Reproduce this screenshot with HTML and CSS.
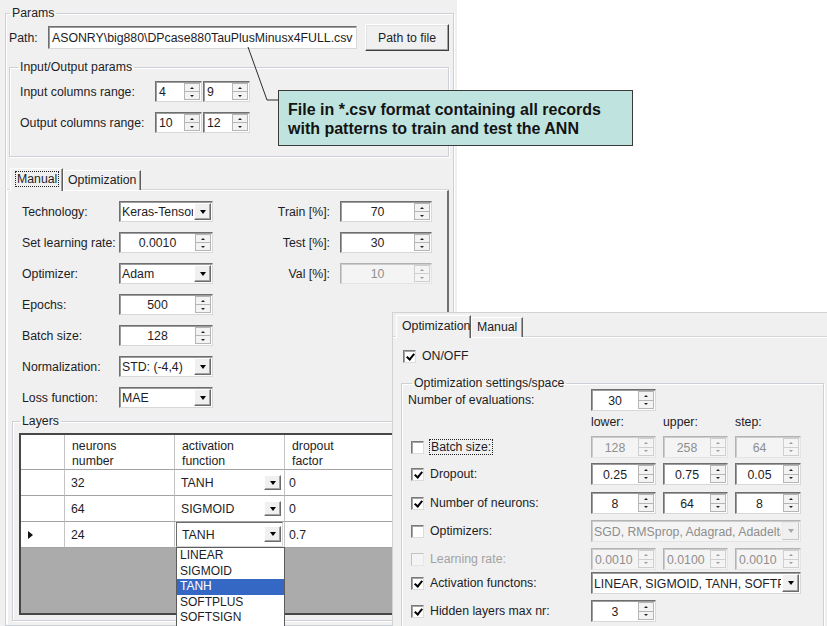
FILE: index.html
```html
<!DOCTYPE html>
<html lang="en">
<head>
<meta charset="utf-8">
<title>ANN training settings</title>
<link rel="stylesheet" href="styles.css">
</head>
<body>
<main class="desk">

  <section class="win win-main">
    <fieldset class="group group-params">
      <legend>Params</legend>
      <div class="params-body">
        <div class="path-row">
          <span class="path-label">Path:</span>
          <div class="field path-field">ASONRY\big880\DPcase880TauPlusMinusx4FULL.csv</div>
          <button class="push" type="button">Path to file</button>
        </div>

        <fieldset class="group group-io">
          <legend>Input/Output params</legend>
          <div class="io-body">
            <div class="io-row">
              <span class="io-label">Input columns range:</span>
              <div class="spin io-spin"><span class="spin-val left">4</span><span class="spin-btns"><i class="up"></i><i class="dn"></i></span></div>
              <div class="spin io-spin"><span class="spin-val left">9</span><span class="spin-btns"><i class="up"></i><i class="dn"></i></span></div>
            </div>
            <div class="io-row">
              <span class="io-label">Output columns range:</span>
              <div class="spin io-spin"><span class="spin-val left">10</span><span class="spin-btns"><i class="up"></i><i class="dn"></i></span></div>
              <div class="spin io-spin"><span class="spin-val left">12</span><span class="spin-btns"><i class="up"></i><i class="dn"></i></span></div>
            </div>
          </div>
        </fieldset>

        <div class="tabs tabs-main">
          <div class="tabstrip">
            <span class="tab tab-on"><span class="focus">Manual</span></span>
            <span class="tab">Optimization</span>
          </div>
          <div class="tabpage manual-page">
            <div class="manual-grid">
              <span class="lbl">Technology:</span>
              <div class="combo"><span class="combo-val">Keras-TensorFlow</span><span class="drop"></span></div>
              <span class="lbl-r">Train [%]:</span>
              <div class="spin"><span class="spin-val">70</span><span class="spin-btns"><i class="up"></i><i class="dn"></i></span></div>

              <span class="lbl">Set learning rate:</span>
              <div class="spin"><span class="spin-val">0.0010</span><span class="spin-btns"><i class="up"></i><i class="dn"></i></span></div>
              <span class="lbl-r">Test [%]:</span>
              <div class="spin"><span class="spin-val">30</span><span class="spin-btns"><i class="up"></i><i class="dn"></i></span></div>

              <span class="lbl">Optimizer:</span>
              <div class="combo"><span class="combo-val">Adam</span><span class="drop"></span></div>
              <span class="lbl-r">Val [%]:</span>
              <div class="spin off"><span class="spin-val">10</span><span class="spin-btns"><i class="up"></i><i class="dn"></i></span></div>

              <span class="lbl">Epochs:</span>
              <div class="spin"><span class="spin-val">500</span><span class="spin-btns"><i class="up"></i><i class="dn"></i></span></div>

              <span class="lbl">Batch size:</span>
              <div class="spin"><span class="spin-val">128</span><span class="spin-btns"><i class="up"></i><i class="dn"></i></span></div>

              <span class="lbl">Normalization:</span>
              <div class="combo"><span class="combo-val">STD: (-4,4)</span><span class="drop"></span></div>

              <span class="lbl">Loss function:</span>
              <div class="combo"><span class="combo-val">MAE</span><span class="drop"></span></div>
            </div>

            <fieldset class="group group-layers">
              <legend>Layers</legend>
              <div class="layers-body">
                <div class="dgv">
                  <div class="dgv-row dgv-head">
                    <span class="rh"></span>
                    <span class="hc">neurons<br>number</span>
                    <span class="hc">activation<br>function</span>
                    <span class="hc">dropout<br>factor</span>
                  </div>
                  <div class="dgv-row">
                    <span class="rh"></span>
                    <span class="c">32</span>
                    <span class="c c-act">TANH<span class="cell-drop"></span></span>
                    <span class="c c-drop">0</span>
                  </div>
                  <div class="dgv-row">
                    <span class="rh"></span>
                    <span class="c">64</span>
                    <span class="c c-act">SIGMOID<span class="cell-drop"></span></span>
                    <span class="c c-drop">0</span>
                  </div>
                  <div class="dgv-row">
                    <span class="rh rh-current"><i class="row-arrow"></i></span>
                    <span class="c">24</span>
                    <span class="c c-act c-edit">
                      <span class="cell-combo">TANH<span class="cell-drop"></span></span>
                      <ul class="droplist">
                        <li>LINEAR</li>
                        <li>SIGMOID</li>
                        <li class="sel">TANH</li>
                        <li>SOFTPLUS</li>
                        <li>SOFTSIGN</li>
                      </ul>
                    </span>
                    <span class="c c-drop">0.7</span>
                  </div>
                </div>
              </div>
            </fieldset>
          </div>
        </div>
      </div>
    </fieldset>
  </section>

  <svg class="leader" width="300" height="110" viewBox="0 0 300 110" aria-hidden="true">
    <polyline points="248,47 267,100 278,100" fill="none" stroke="#2b2b2b" stroke-width="1"/>
  </svg>
  <div class="callout">File in *.csv format containing all records<br>with patterns to train and test the ANN</div>

  <section class="win win-opt">
    <div class="tabs tabs-opt">
      <div class="tabstrip">
        <span class="tab tab-on">Optimization</span>
        <span class="tab">Manual</span>
      </div>
      <div class="tabpage opt-page">
        <div class="check-row"><span class="cb on"></span><span>ON/OFF</span></div>

        <fieldset class="group group-space">
          <legend>Optimization settings/space</legend>
          <div class="space-grid">
            <span class="olbl">Number of evaluations:</span>
            <div class="spin"><span class="spin-val">30</span><span class="spin-btns"><i class="up"></i><i class="dn"></i></span></div>
            <span></span><span></span>

            <span></span>
            <span class="hdr">lower:</span>
            <span class="hdr">upper:</span>
            <span class="hdr">step:</span>

            <span class="olbl chk"><span class="cb"></span><span class="focus">Batch size:</span></span>
            <div class="spin off"><span class="spin-val">128</span><span class="spin-btns"><i class="up"></i><i class="dn"></i></span></div>
            <div class="spin off"><span class="spin-val">258</span><span class="spin-btns"><i class="up"></i><i class="dn"></i></span></div>
            <div class="spin off"><span class="spin-val">64</span><span class="spin-btns"><i class="up"></i><i class="dn"></i></span></div>

            <span class="olbl chk"><span class="cb on"></span><span>Dropout:</span></span>
            <div class="spin"><span class="spin-val">0.25</span><span class="spin-btns"><i class="up"></i><i class="dn"></i></span></div>
            <div class="spin"><span class="spin-val">0.75</span><span class="spin-btns"><i class="up"></i><i class="dn"></i></span></div>
            <div class="spin"><span class="spin-val">0.05</span><span class="spin-btns"><i class="up"></i><i class="dn"></i></span></div>

            <span class="olbl chk"><span class="cb on"></span><span>Number of neurons:</span></span>
            <div class="spin"><span class="spin-val">8</span><span class="spin-btns"><i class="up"></i><i class="dn"></i></span></div>
            <div class="spin"><span class="spin-val">64</span><span class="spin-btns"><i class="up"></i><i class="dn"></i></span></div>
            <div class="spin"><span class="spin-val">8</span><span class="spin-btns"><i class="up"></i><i class="dn"></i></span></div>

            <span class="olbl chk"><span class="cb"></span><span>Optimizers:</span></span>
            <div class="combo wide off"><span class="combo-val">SGD, RMSprop, Adagrad, Adadelta, Adam</span><span class="drop"></span></div>

            <span class="olbl chk dim"><span class="cb off"></span><span>Learning rate:</span></span>
            <div class="spin off"><span class="spin-val left">0.0010</span><span class="spin-btns"><i class="up"></i><i class="dn"></i></span></div>
            <div class="spin off"><span class="spin-val left">0.0100</span><span class="spin-btns"><i class="up"></i><i class="dn"></i></span></div>
            <div class="spin off"><span class="spin-val left">0.0010</span><span class="spin-btns"><i class="up"></i><i class="dn"></i></span></div>

            <span class="olbl chk"><span class="cb on"></span><span>Activation functons:</span></span>
            <div class="combo wide"><span class="combo-val">LINEAR, SIGMOID, TANH, SOFTPLUS, SOFTSIGN</span><span class="drop"></span></div>

            <span class="olbl chk"><span class="cb on"></span><span>Hidden layers max nr:</span></span>
            <div class="spin"><span class="spin-val">3</span><span class="spin-btns"><i class="up"></i><i class="dn"></i></span></div>
          </div>
        </fieldset>
      </div>
    </div>
  </section>

</main>
</body>
</html>
```

FILE: styles.css
```css
* { box-sizing: border-box; }

html, body { margin: 0; padding: 0; }

body {
  width: 827px;
  height: 626px;
  overflow: hidden;
  background: #fff;
  font-family: "Liberation Sans", Arial, sans-serif;
  font-size: 12.3px;
  color: #1d1d26;
}

.desk {
  position: relative;
  width: 827px;
  height: 626px;
}

/* ---------- common window controls ---------- */

.win { background: #f0f0f0; }

.group {
  margin: 0;
  padding: 0;
  min-width: 0;
  border: 1px solid #cbd1d6;
  box-shadow: inset 1px 1px 0 #fff, 1px 1px 0 #fff;
}

.group > legend {
  padding: 0 2px;
  height: 14px;
  line-height: 14px;
  font-size: 12.3px;
}

.field, .spin, .combo {
  height: 21px;
  display: flex;
  align-items: stretch;
  background: #fff;
  border: 1px solid;
  border-color: #6f6f6f #d8d8d8 #d8d8d8 #6f6f6f;
  box-shadow: inset 1px 1px 0 #9d9d9d;
  white-space: nowrap;
  overflow: hidden;
}

.spin-val {
  flex: 1;
  display: flex;
  align-items: center;
  justify-content: center;
  overflow: hidden;
  padding-top: 1px;
}

.spin-val.left {
  justify-content: flex-start;
  padding-left: 3px;
}

.spin-btns {
  width: 16px;
  flex: none;
  display: flex;
  flex-direction: column;
  margin: 1px 1px 1px 0;
}

.spin-btns i {
  flex: 1;
  display: flex;
  align-items: center;
  justify-content: center;
  background: #f3f3f3;
  border: 1px solid #b5b5b5;
}

.spin-btns i.dn { border-top: none; }

.spin-btns i::before {
  content: "";
  border-left: 2px solid transparent;
  border-right: 2px solid transparent;
}

.spin-btns i.up::before { border-bottom: 2px solid #222; }
.spin-btns i.dn::before { border-top: 2px solid #222; }

.combo-val {
  flex: 1;
  display: flex;
  align-items: center;
  padding: 1px 0 0 2px;
  overflow: hidden;
}

.drop {
  width: 17px;
  flex: none;
  margin: 1px;
  display: flex;
  align-items: center;
  justify-content: center;
  background: #f0f0f0;
  border: 1px solid;
  border-color: #fff #6b6b6b #6b6b6b #fff;
  box-shadow: inset -1px -1px 0 #a3a3a3;
}

.drop::before {
  content: "";
  border-top: 4px solid #000;
  border-left: 3.5px solid transparent;
  border-right: 3.5px solid transparent;
}

.spin.off, .combo.off {
  background: #f4f4f4;
  color: #8e8e8e;
  border-color: #b2b2b2 #e4e4e4 #e4e4e4 #b2b2b2;
  box-shadow: inset 1px 1px 0 #cdcdcd;
}

.spin.off .spin-btns i { border-color: #cfcfcf; background: #f4f4f4; }
.spin.off .spin-btns i.up::before { border-bottom-color: #9a9a9a; }
.spin.off .spin-btns i.dn::before { border-top-color: #9a9a9a; }
.combo.off .drop { border-color: #e8e8e8 #c6c6c6 #c6c6c6 #e8e8e8; box-shadow: none; }
.combo.off .drop::before { border-top-color: #a6a6a6; }

.push {
  font: inherit;
  color: inherit;
  padding: 0;
  background: #f0f0f0;
  border: 1px solid;
  border-color: #fff #3f3f3f #3f3f3f #fff;
  box-shadow: inset -1px -1px 0 #a0a0a0, inset 1px 1px 0 #e3e3e3;
}

.focus {
  outline: 1px dotted #222;
  outline-offset: 0;
  padding: 0 1px;
}

/* tabs */

.tabstrip {
  display: flex;
  align-items: flex-end;
  height: 22px;
}

.tab {
  height: 20px;
  line-height: 18px;
  padding: 0 4px;
  background: #f0f0f0;
  border: 1px solid;
  border-bottom: none;
  border-color: #fff #5e5e5e transparent #fff;
  box-shadow: inset -1px 0 0 #a0a0a0;
  white-space: nowrap;
}

.tab-on {
  position: relative;
  z-index: 1;
  height: 23px;
  margin-bottom: -1px;
  line-height: 20px;
}

.tabpage {
  border-top: 1px solid #fff;
  box-shadow: 0 -1px 0 #d6d6d6;
}

/* ---------- main form ---------- */

.win-main {
  width: 457px;
  height: 626px;
  padding: 6px 0 0 5px;
}

.group-params {
  width: 449px;
  height: 620px;
}

.group-params > legend { margin-left: 4px; }

.params-body { padding: 4px 0 0 3px; }

.path-row {
  display: flex;
  align-items: center;
  height: 27px;
}

.path-label { width: 39px; flex: none; }

.path-field {
  width: 309px;
  height: 23px;
  flex: none;
  align-items: center;
  padding: 1px 0 0 3px;
}

.push {
  width: 84px;
  height: 27px;
  margin-left: 8px;
  flex: none;
}

.group-io {
  width: 440px;
  margin-top: 9px;
}

.group-io > legend { margin-left: 8px; }

.io-body {
  padding: 7px 0 23px 10px;
  display: flex;
  flex-direction: column;
  gap: 10px;
}

.io-row {
  display: flex;
  align-items: center;
  height: 21px;
}

.io-label { width: 135px; flex: none; }

.io-spin { width: 47px; flex: none; }
.io-spin + .io-spin { margin-left: 1px; }

.tabs-main {
  width: 442px;
  margin: 11px 0 0 -2px;
}

.tabs-main .tabstrip { padding-left: 3px; }
.tabs-main .tab-on { width: 53px; padding: 0 5px; }

.manual-page {
  height: 434px;
  padding: 10px 0 0 4px;
  border-left: 1px solid #fff;
  border-right: 2px solid #6f6f6f;
}

.manual-grid {
  display: grid;
  grid-template-columns: 97px 94px 127px 92px;
  grid-auto-rows: 21px;
  row-gap: 10px;
  padding-left: 10px;
}

.lbl {
  grid-column: 1;
  display: flex;
  align-items: center;
}

.lbl-r {
  display: flex;
  align-items: center;
  justify-content: flex-end;
  padding-right: 10px;
}

.group-layers {
  width: 432px;
  margin-top: 6px;
}

.group-layers > legend { margin-left: 7px; }

.layers-body { padding: 5px 0 5px 6px; }

/* data grid */

.dgv {
  width: 422px;
  height: 182px;
  background: #ababab;
  border: 2px solid #474747;
}

.dgv-row {
  display: grid;
  grid-template-columns: 44px 110px 110px 1fr;
  height: 26px;
  background: #fff;
}

.dgv-row > span {
  border-right: 1px solid #c4c4c4;
  border-bottom: 1px solid #a3a3a3;
}

.dgv-head { height: 35px; }

.hc {
  padding: 4px 0 0 7px;
  line-height: 15px;
}

.c {
  display: flex;
  align-items: center;
  padding: 1px 0 0 6px;
}

.c-act { position: relative; }
.c-drop { padding-left: 4px; }

.cell-drop {
  position: absolute;
  right: 3px;
  top: 5px;
  width: 17px;
  height: 15px;
  display: flex;
  align-items: center;
  justify-content: center;
  background: #f0f0f0;
  border: 1px solid;
  border-color: #fff #6b6b6b #6b6b6b #fff;
  box-shadow: inset -1px -1px 0 #a3a3a3;
}

.cell-drop::before {
  content: "";
  border-top: 4px solid #000;
  border-left: 3.5px solid transparent;
  border-right: 3.5px solid transparent;
}

.c-edit { padding: 0; }

.cell-combo {
  position: relative;
  flex: 1;
  align-self: stretch;
  margin: 0 1px 0 1px;
  display: flex;
  align-items: center;
  padding: 1px 0 0 5px;
  border: 1px solid;
  border-color: #6d6d6d #d6d6d6 #d6d6d6 #6d6d6d;
}

.cell-combo .cell-drop { right: 1px; top: 3px; height: 16px; }

.rh-current {
  display: flex;
  align-items: center;
  padding-left: 7px;
}

.row-arrow {
  width: 0;
  height: 0;
  border-left: 5px solid #111;
  border-top: 4.5px solid transparent;
  border-bottom: 4.5px solid transparent;
}

.droplist {
  position: absolute;
  top: 100%;
  left: 1px;
  width: 109px;
  margin: 0;
  padding: 0;
  list-style: none;
  background: #fff;
  border: 1px solid #5c5c5c;
  z-index: 2;
}

.droplist li {
  height: 15.5px;
  line-height: 15.5px;
  padding-left: 3px;
  font-size: 12px;
}

.droplist li.sel {
  background: #3568c4;
  color: #fff;
}

/* ---------- callout ---------- */

.leader {
  position: absolute;
  left: 0;
  top: 0;
  z-index: 3;
}

.callout {
  position: absolute;
  left: 278px;
  top: 90px;
  width: 355px;
  height: 56px;
  z-index: 3;
  padding: 9px 0 0 9px;
  background: #bfe4e0;
  border: 1px solid #3a3a3a;
  font-weight: bold;
  font-size: 16px;
  line-height: 19px;
  color: #131313;
}

/* ---------- optimization form ---------- */

.win-opt {
  position: absolute;
  left: 392px;
  top: 312px;
  width: 435px;
  height: 314px;
  z-index: 4;
  padding-top: 2px;
  border-left: 1px solid #d2d2d2;
  border-top: 1px solid #d2d2d2;
}

.tabs-opt .tabstrip { padding-left: 3px; }
.tabs-opt .tab-on { width: 75px; padding: 0 3px; }
.tabs-opt .tab { padding: 0 5px; }

.opt-page {
  height: 290px;
  padding: 10px 0 0 10px;
}

.check-row {
  display: flex;
  align-items: center;
  gap: 6px;
  height: 16px;
}

.cb {
  position: relative;
  width: 13px;
  height: 13px;
  flex: none;
  background: #fff;
  border: 1px solid;
  border-color: #7a7a7a #dcdcdc #dcdcdc #7a7a7a;
  box-shadow: inset 1px 1px 0 #a5a5a5;
}

.cb.on::after {
  content: "";
  position: absolute;
  left: 3.5px;
  top: 1px;
  width: 3px;
  height: 6px;
  border-right: 2px solid #000;
  border-bottom: 2px solid #000;
  transform: rotate(40deg);
}

.cb.off {
  background: #f4f4f4;
  border-color: #c3c3c3 #e6e6e6 #e6e6e6 #c3c3c3;
  box-shadow: none;
}

.group-space {
  width: 423px;
  height: 262px;
  margin: 12px 0 0 -2px;
}

.group-space > legend { margin-left: 10px; }

.space-grid {
  display: grid;
  grid-template-columns: 176px 65px 65px 66px;
  grid-template-rows: 22px 25px 27px 29px 28px 28px 24px 28px 22px;
  column-gap: 7px;
  align-items: start;
  margin-top: -1px;
  padding-left: 6px;
}

.space-grid .spin, .space-grid .combo { height: 22px; }

.olbl {
  grid-column: 1;
  height: 22px;
  display: flex;
  align-items: center;
}

.olbl.chk {
  padding-left: 3px;
  gap: 6px;
}

.olbl.dim { color: #a2a2a2; }

.hdr {
  height: 22px;
  display: flex;
  align-items: center;
}

.combo.wide { grid-column: 2 / 5; }
```
